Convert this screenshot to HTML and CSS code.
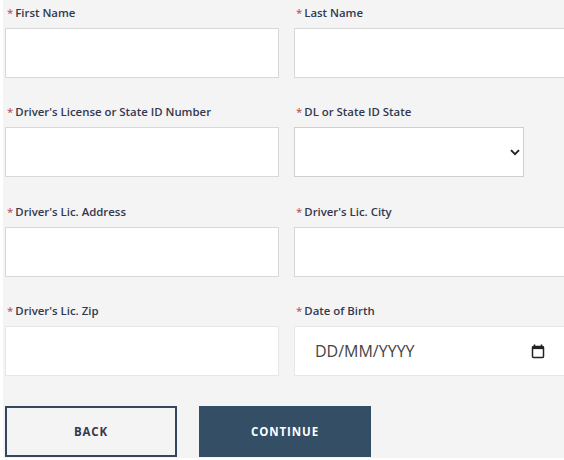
FILE: index.html
```html
<!DOCTYPE html>
<html lang="en">
<head>
    <meta charset="UTF-8">
    <meta name="viewport" content="width=device-width, initial-scale=1.0">
    <title>Driver Information</title>
    <link rel="stylesheet" href="styles.css">
</head>
<body>
    <form class="form">
        <div class="grid">
            <div class="field">
                <label class="label"><span class="req">*</span>First Name</label>
                <input class="input" type="text">
            </div>
            <div class="field">
                <label class="label"><span class="req">*</span>Last Name</label>
                <input class="input input-open" type="text">
            </div>
            <div class="field">
                <label class="label"><span class="req">*</span>Driver's License or State ID Number</label>
                <input class="input" type="text">
            </div>
            <div class="field">
                <label class="label"><span class="req">*</span>DL or State ID State</label>
                <div class="input input-select">
                    <svg class="chevron" width="10" height="7" viewBox="0 0 10 7">
                        <path d="M1 1.2 L5 5.2 L9 1.2" fill="none" stroke="#222" stroke-width="1.9"/>
                    </svg>
                </div>
            </div>
            <div class="field">
                <label class="label"><span class="req">*</span>Driver's Lic. Address</label>
                <input class="input" type="text">
            </div>
            <div class="field">
                <label class="label"><span class="req">*</span>Driver's Lic. City</label>
                <input class="input input-open" type="text">
            </div>
            <div class="field">
                <label class="label"><span class="req">*</span>Driver's Lic. Zip</label>
                <input class="input input-light" type="text">
            </div>
            <div class="field">
                <label class="label"><span class="req">*</span>Date of Birth</label>
                <div class="input input-open input-light input-date">
                    <span>DD/MM/YYYY</span>
                    <svg class="calendar" width="14" height="15" viewBox="0 0 14 15">
                        <path d="M3.5 0.5 V3 M10.5 0.5 V3" stroke="#222" stroke-width="1.6"/>
                        <rect x="1.5" y="2.5" width="11" height="11" rx="1" fill="none" stroke="#222" stroke-width="1.5"/>
                        <rect x="1.5" y="2.5" width="11" height="2.6" fill="#222"/>
                    </svg>
                </div>
            </div>
        </div>
        <div class="actions">
            <button class="btn btn-back" type="button">BACK</button>
            <button class="btn btn-continue" type="button">CONTINUE</button>
        </div>
    </form>
</body>
</html>
```

FILE: styles.css
```css
html {
    background: white;
}

body {
    margin: 0 0 0 3px;
    height: 458px;
    overflow: hidden;
    background: #f4f4f4;
    font-family: 'Open Sans', Arial, sans-serif;
    color: #33384f;
}

.form {
    padding: 5px 0 0 2px;
}

.grid {
    display: grid;
    grid-template-columns: 274px 270px;
    column-gap: 15px;
    row-gap: 26.4px;
}

.label {
    display: block;
    height: 23px;
    padding-left: 2px;
    font-size: 11.4px;
    font-weight: 600;
    line-height: 16px;
}

.req {
    color: #b5404f;
    margin-right: 2px;
    font-weight: 400;
}

.input {
    display: block;
    box-sizing: border-box;
    width: 100%;
    height: 50px;
    background: white;
    border: 1px solid #d8d8d8;
    border-radius: 0;
}

.input-open {
    border-right: none;
}

.input-light {
    border-color: #e6e6e6;
}

.input-select {
    display: flex;
    align-items: center;
    justify-content: flex-end;
    width: 230px;
    padding-right: 3px;
    border-color: #cfcfcf;
}

.input-date {
    display: flex;
    align-items: center;
    justify-content: space-between;
    padding: 0 19px 0 20px;
    font-size: 16px;
    color: #444;
}

.actions {
    display: flex;
    gap: 22px;
    margin-top: 30px;
}

.btn {
    box-sizing: border-box;
    width: 172px;
    height: 51px;
    font-family: inherit;
    font-size: 11.5px;
    font-weight: 700;
    letter-spacing: 0.9px;
    border-radius: 0;
    cursor: pointer;
}

.btn-back {
    background: #f4f4f4;
    color: #33384f;
    border: 2px solid #33485f;
}

.btn-continue {
    background: #344e65;
    color: white;
    border: none;
}
```
